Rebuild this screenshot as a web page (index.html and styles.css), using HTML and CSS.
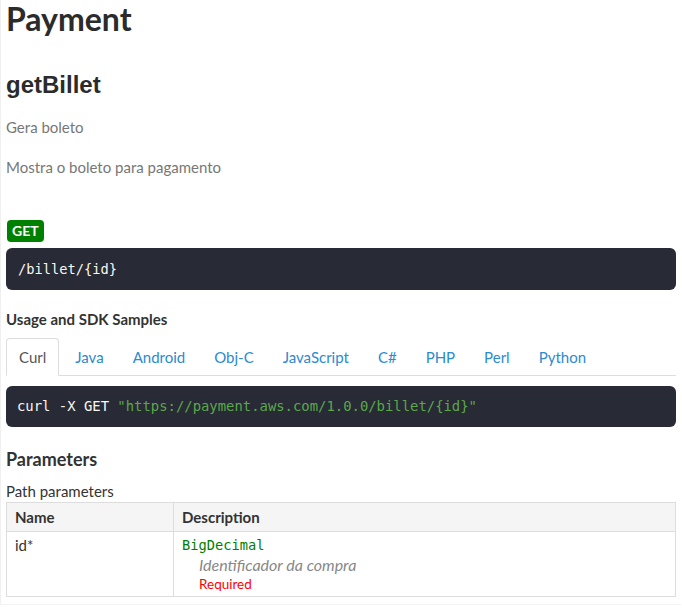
FILE: index.html
```html
<!DOCTYPE html>
<html>
<head>
<meta charset="utf-8">
<link rel="stylesheet" href="styles.css">
</head>
<body>
<div class="page">
  <h1 class="title">Payment</h1>
  <h2 class="method">getBillet</h2>
  <p class="summary">Gera boleto</p>
  <p class="desc">Mostra o boleto para pagamento</p>
  <span class="badge">GET</span>
  <pre class="code path">/billet/{id}</pre>
  <h4 class="usage">Usage and SDK Samples</h4>
  <ul class="tabs">
    <li class="tab active">Curl</li>
    <li class="tab">Java</li>
    <li class="tab">Android</li>
    <li class="tab">Obj-C</li>
    <li class="tab">JavaScript</li>
    <li class="tab">C#</li>
    <li class="tab">PHP</li>
    <li class="tab">Perl</li>
    <li class="tab">Python</li>
  </ul>
  <pre class="code sample">curl -X GET <span class="str">"https://payment.aws.com/1.0.0/billet/{id}"</span></pre>
  <h3 class="params">Parameters</h3>
  <div class="subtitle">Path parameters</div>
  <table class="ptable">
    <thead>
      <tr><th class="col-name">Name</th><th>Description</th></tr>
    </thead>
    <tbody>
      <tr>
        <td class="col-name">id*</td>
        <td>
          <div class="type">BigDecimal</div>
          <div class="pdesc">Identificador da compra</div>
          <div class="req">Required</div>
        </td>
      </tr>
    </tbody>
  </table>
</div>
</body>
</html>
```
FILE: styles.css
```css
html, body {
  margin: 0;
  padding: 0;
  background: #fff;
}
body {
  font-family: Lato, "Open Sans", sans-serif;
  font-size: 15px;
  color: #333;
}
.page {
  border-left: 1px solid #f0f0f0;
  border-bottom: 1px solid #f3f3f3;
  padding: 1px 5px 7px 5px;
  width: 670px;
}
.title {
  margin: -2px 0 0;
  font-size: 32px;
  line-height: 39px;
  font-weight: 700;
  color: #2b2b2b;
}
.method {
  margin: 33px 0 0;
  font-family: "Liberation Sans", Arial, sans-serif;
  font-size: 24px;
  line-height: 28px;
  font-weight: 700;
  color: #2b2b2b;
}
.summary, .desc {
  margin: 18px 0 0;
  line-height: 20px;
  color: #777;
}
.desc {
  margin-top: 20px;
}
.badge {
  display: inline-block;
  margin-top: 43px;
  margin-left: 1px;
  height: 22px;
  line-height: 22px;
  padding: 0 5px;
  background: #008000;
  color: #fff;
  font-weight: 700;
  font-size: 14px;
  border-radius: 4px;
  vertical-align: top;
}
.code {
  margin: 6px 0 0;
  background: #282a36;
  color: #f8f8f2;
  border-radius: 6px;
  font-family: "DejaVu Sans Mono", monospace;
  font-size: 13.7px;
  line-height: 20px;
  padding: 11px 12px;
}
.path {
  margin-top: 6px;
}
.sample {
  margin-top: 10px;
  padding: 10px 11px 11px;
  font-size: 13.9px;
}
.str {
  color: #5aa84a;
}
.usage {
  margin: 19px 0 0;
  font-size: 15px;
  line-height: 20px;
  font-weight: 700;
  color: #333;
}
.tabs {
  list-style: none;
  margin: 9px 0 0;
  padding: 0;
  display: flex;
  gap: 3px;
  border-bottom: 1px solid #ddd;
}
.tab {
  padding: 8px 12px 8px;
  line-height: 20px;
  border: 1px solid transparent;
  border-radius: 4px 4px 0 0;
  margin-bottom: -1px;
  color: #2b8ad2;
}
.tab.active {
  color: #555;
  border-color: #ddd #ddd transparent;
  background: #fff;
}
.params {
  margin: 21px 0 0;
  font-size: 18px;
  line-height: 22px;
  font-weight: 700;
  color: #333;
}
.subtitle {
  margin-top: 11px;
  line-height: 20px;
}
.ptable {
  margin-top: 1px;
  width: 100%;
  border-collapse: collapse;
  border: 1px solid #ddd;
}
.ptable th, .ptable td {
  border: 1px solid #ddd;
  text-align: left;
  vertical-align: top;
  padding: 4px 8px;
  line-height: 20px;
}
.ptable th {
  background: #f5f5f5;
  font-weight: 700;
}
.ptable td {
  padding: 3px 8px 3px;
}
.col-name {
  width: 150px;
}
.type {
  font-family: "DejaVu Sans Mono", monospace;
  font-size: 13.7px;
  color: #008000;
}
.pdesc {
  margin-left: 17px;
  font-size: 16px;
  font-style: italic;
  color: #888;
}
.req {
  margin-left: 17px;
  font-size: 13.5px;
  line-height: 18px;
  color: #f00;
}
```
